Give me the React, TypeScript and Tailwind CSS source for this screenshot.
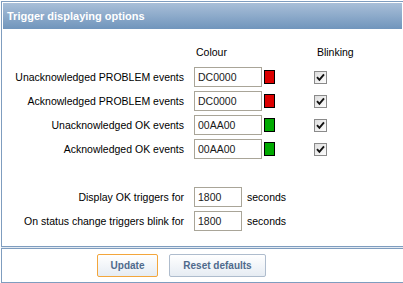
import React from "react";

const rows = [
  { label: "Unacknowledged PROBLEM events", value: "DC0000", swatch: "bg-[#dc0000]" },
  { label: "Acknowledged PROBLEM events", value: "DC0000", swatch: "bg-[#dc0000]" },
  { label: "Unacknowledged OK events", value: "00AA00", swatch: "bg-[#00aa00]" },
  { label: "Acknowledged OK events", value: "00AA00", swatch: "bg-[#00aa00]" },
];

function Check() {
  return (
    <svg width="13" height="13" viewBox="0 0 13 13" className="block">
      <defs>
        <linearGradient id="cbg" x1="0" y1="0" x2="1" y2="1">
          <stop offset="0" stopColor="#dcdcdc" />
          <stop offset="1" stopColor="#ffffff" />
        </linearGradient>
      </defs>
      <rect x="0.5" y="0.5" width="12" height="12" fill="url(#cbg)" stroke="#8a8a8a" />
      <path d="M3 6.2 L5.4 8.8 L10 3.4" fill="none" stroke="#111" strokeWidth="1.9" />
    </svg>
  );
}

export default function App() {
  return (
    <div className="w-[403px] h-[283px] bg-white overflow-hidden pt-px pl-px font-['Liberation_Sans',Arial,sans-serif] text-[10.5px] leading-[14px] text-black">
      <div className="h-[246px] border border-r-0 border-[#7f9dbf] p-px">
        <div className="h-[26px] flex items-center pl-[4px] bg-gradient-to-b from-[#a9bfd8] to-[#7095bc] text-white font-bold text-[11px]">
          Trigger displaying options
        </div>
        <div className="flex flex-col">
          <div className="flex mt-[16px] h-[14px]">
            <div className="w-[181px]" />
            <div className="ml-[12px]">Colour</div>
            <div className="ml-[90px]">Blinking</div>
          </div>
          <div className="flex flex-col gap-[4px] mt-[8px]">
            {rows.map((r) => (
              <div key={r.label} className="flex items-center h-[20px]">
                <div className="w-[181px] text-right">{r.label}</div>
                <input
                  readOnly
                  value={r.value}
                  className="ml-[10px] w-[68px] h-[20px] border border-[#a9a598] pl-[3px] text-[#1a1a1a] outline-none bg-white"
                />
                <div className={`ml-[2px] w-[11px] h-[14px] border border-black ${r.swatch}`} />
                <div className="ml-[39px]">
                  <Check />
                </div>
              </div>
            ))}
          </div>
          <div className="flex flex-col gap-[4px] mt-[28px]">
            {[
              "Display OK triggers for",
              "On status change triggers blink for",
            ].map((l) => (
              <div key={l} className="flex items-center h-[20px]">
                <div className="w-[181px] text-right">{l}</div>
                <input
                  readOnly
                  value="1800"
                  className="ml-[10px] w-[48px] h-[20px] border border-[#a9a598] pl-[3px] text-[#1a1a1a] outline-none bg-white"
                />
                <div className="ml-[5px]">seconds</div>
              </div>
            ))}
          </div>
        </div>
      </div>
      <div className="h-px bg-[#e3eaf2]" />
      <div className="h-[35px] border border-r-0 border-[#7f9dbf] pt-[5px] pl-[95px] flex items-start gap-[11px]">
        <button className="w-[61px] h-[23px] rounded-[2px] border border-[#f3a63c] bg-gradient-to-b from-[#ffffff] to-[#e6ecf3] text-[#4f6a8c] font-bold text-[10px]">
          Update
        </button>
        <button className="w-[97px] h-[23px] rounded-[2px] border border-[#aebccd] bg-gradient-to-b from-[#ffffff] to-[#e6ecf3] text-[#4f6a8c] font-bold text-[10px]">
          Reset defaults
        </button>
      </div>
    </div>
  );
}
